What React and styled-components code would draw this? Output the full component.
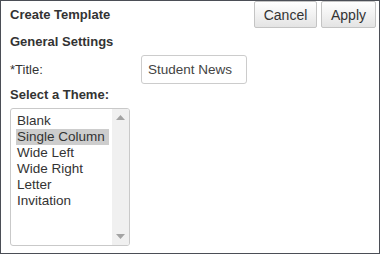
import styled, { createGlobalStyle } from 'styled-components';

const Global = createGlobalStyle`
  html, body {
    margin: 0;
    padding: 0;
    background: #ffffff;
  }
  body {
    font-family: "Liberation Sans", Arial, sans-serif;
    font-size: 13px;
    color: #333333;
  }
`;

const Frame = styled.div`
  width: 380px;
  height: 254px;
  box-sizing: border-box;
  border: 1px solid #4b4e56;
  background: #ffffff;
  display: flex;
  flex-direction: column;
`;

const Header = styled.div`
  display: flex;
  align-items: center;
  justify-content: space-between;
  padding: 0 3px 0 9px;
  height: 27px;
`;

const Heading = styled.div`
  font-weight: bold;
  font-size: 13px;
  color: #333;
`;

const Actions = styled.div`
  display: flex;
  gap: 4px;
  align-self: flex-start;
`;

const Button = styled.button`
  height: 27px;
  width: ${(p) => p.$w}px;
  box-sizing: border-box;
  border: 1px solid #c4c4c4;
  border-radius: 2px;
  background: linear-gradient(#ffffff, #e4e4e4);
  font-family: "Liberation Sans", Arial, sans-serif;
  font-size: 14px;
  color: #333;
  padding: 0;
`;

const Body = styled.div`
  padding: 0 9px;
  display: flex;
  flex-direction: column;
`;

const Section = styled.div`
  font-weight: bold;
  font-size: 13px;
  margin-top: ${(p) => p.$top}px;
  height: 16px;
  line-height: 16px;
`;

const FieldRow = styled.div`
  display: grid;
  grid-template-columns: 131px 106px;
  align-items: center;
  margin-top: 5px;
`;

const Label = styled.label`
  font-size: 13px;
`;

const TextInput = styled.div`
  height: 29px;
  box-sizing: border-box;
  border: 1px solid #cccccc;
  border-radius: 3px;
  padding: 0 6px;
  display: flex;
  align-items: center;
  font-size: 13.5px;
  color: #444;
`;

const ListBox = styled.div`
  margin-top: 5px;
  width: 120px;
  height: 138px;
  box-sizing: border-box;
  border: 1px solid #c9c9c9;
  border-radius: 3px;
  display: flex;
  overflow: hidden;
`;

const Options = styled.div`
  flex: 1;
  padding: 4px 0 0 5px;
  display: flex;
  flex-direction: column;
`;

const Option = styled.div`
  font-size: 13.5px;
  line-height: 16px;
  height: 16px;
  padding-left: 1px;
  width: 92px;
  background: ${(p) => (p.$selected ? '#cdcdcd' : 'transparent')};
  color: #333;
  white-space: nowrap;
`;

const Scrollbar = styled.div`
  width: 17px;
  background: #f0f0f0;
  display: flex;
  flex-direction: column;
  justify-content: space-between;
  align-items: center;
  padding: 6px 0;
  box-sizing: border-box;
`;

const themes = ['Blank', 'Single Column', 'Wide Left', 'Wide Right', 'Letter', 'Invitation'];

const Arrow = ({ down }) => (
  <svg width="9" height="5" viewBox="0 0 9 5">
    <polygon points={down ? '0,0 9,0 4.5,5' : '0,5 9,5 4.5,0'} fill="#a3a3a3" />
  </svg>
);

export default function App() {
  return (
    <>
      <Global />
      <Frame>
        <Header>
          <Heading>Create Template</Heading>
          <Actions>
            <Button $w={63}>Cancel</Button>
            <Button $w={55}>Apply</Button>
          </Actions>
        </Header>
        <Body>
          <Section $top={6}>General Settings</Section>
          <FieldRow>
            <Label>*Title:</Label>
            <TextInput>Student News</TextInput>
          </FieldRow>
          <Section $top={3}>Select a Theme:</Section>
          <ListBox>
            <Options>
              {themes.map((t) => (
                <Option key={t} $selected={t === 'Single Column'}>
                  {t}
                </Option>
              ))}
            </Options>
            <Scrollbar>
              <Arrow />
              <Arrow down />
            </Scrollbar>
          </ListBox>
        </Body>
      </Frame>
    </>
  );
}
